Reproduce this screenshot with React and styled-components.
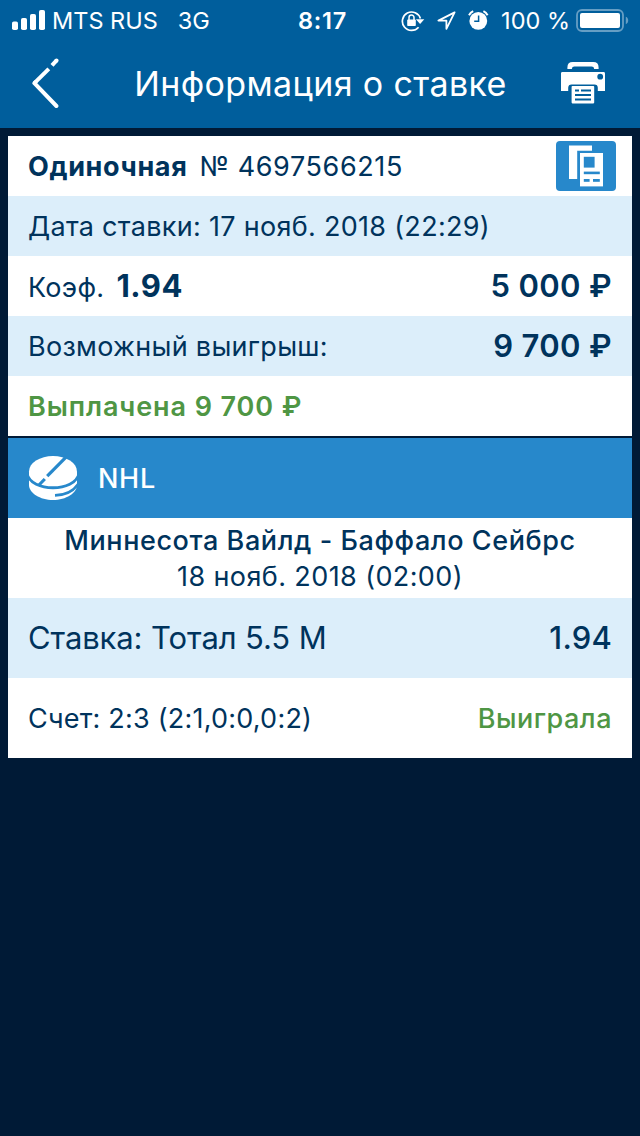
import React from "react";
import styled, { createGlobalStyle } from "styled-components";

const SignalIcon = () => (
  <svg width="34" height="21" viewBox="0 0 34 21" fill="#fff">
    <rect x="0" y="11.5" width="6" height="8.5" rx="1.8" />
    <rect x="9" y="8" width="6" height="12" rx="1.8" />
    <rect x="18" y="4" width="6" height="16" rx="1.8" />
    <rect x="27" y="0" width="6" height="20" rx="1.8" />
  </svg>
);

const LockIcon = () => (
  <svg width="24" height="22" viewBox="0 0 24 22" fill="none" stroke="#fff">
    <path d="M17.6 17.2A9.2 9.2 0 1 1 19.4 8.6" strokeWidth="1.7" />
    <path d="M14.9 9.3h8.4l-4.2 4.6z" fill="#fff" stroke="none" />
    <rect x="6.2" y="9.6" width="8.6" height="6.4" rx="0.8" fill="#fff" stroke="none" />
    <path d="M8 10V7.6a2.5 2.5 0 0 1 5 0V10" strokeWidth="1.5" />
  </svg>
);

const LocationIcon = () => (
  <svg width="19" height="19" viewBox="0 0 19 19" fill="none" stroke="#fff">
    <path d="M17.6 1.4 1.4 9.6h8v8.2z" strokeWidth="1.8" strokeLinejoin="round" />
  </svg>
);

const AlarmIcon = () => (
  <svg width="21" height="21" viewBox="0 0 21 21" fill="none">
    <circle cx="10.3" cy="10.9" r="8.9" fill="#fff" />
    <path d="M1 5.2A10 10 0 0 1 5.2 1.2M15.4 1.2a10 10 0 0 1 4.2 4" stroke="#fff" strokeWidth="2" />
    <path d="M10.6 5.6v5.6H6.2" stroke="#005e9c" strokeWidth="1.5" />
  </svg>
);

const BatteryIcon = () => (
  <svg width="54" height="24" viewBox="0 0 54 24" fill="none">
    <rect x="1" y="1" width="46" height="21" rx="5" stroke="#669ec4" strokeWidth="1.8" />
    <rect x="4" y="4" width="40" height="15" rx="2" fill="#fff" />
    <path d="M49.8 7.8c3.2 1.2 3.2 6.2 0 7.4z" fill="#669ec4" />
  </svg>
);

const BackIcon = () => (
  <svg width="30" height="52" viewBox="0 0 30 52" fill="none" stroke="#fff" strokeWidth="4">
    <path d="M24.4 2.6 24.5 2.5" strokeLinecap="round" />
    <path d="M24.4 2.6 20 7.4" />
    <path d="M16.8 10.8 2.4 25.2" />
    <path d="M3.4 24.2 2.4 25.2 24.4 48" strokeLinecap="round" strokeLinejoin="round" />
  </svg>
);

const PrinterIcon = () => (
  <svg width="46" height="46" viewBox="0 1 46 46" fill="#fff">
    <path d="M7.4 9V7.4Q7.4 2 12.8 2h20.4q5.4 0 5.4 5.4V9h-4.4Q34 6.6 31.6 6.6H14.4Q12 6.6 11.8 9z" />
    <path
      fillRule="evenodd"
      d="M2.4 12h41.2q1.4 0 1.4 1.4V31h-7.2v-3.2q0-3.4-3.4-3.4H11.6q-3.4 0-3.4 3.4V31H1V13.4Q1 12 2.4 12zM40.2 13.8a2.9 2.9 0 1 0 0 5.8 2.9 2.9 0 0 0 0-5.8z"
    />
    <rect x="11.6" y="26" width="22.6" height="17.4" rx="0.8" />
    <path d="M15 30.4h4M21 30.4h10M15 35h16M15 39.4h16" stroke="#005e9c" strokeWidth="2" />
  </svg>
);

const PagesIcon = () => (
  <svg width="36" height="42" viewBox="0 0 36 42">
    <path d="M1 .6h23v5.2H9.2V34H1z" fill="#fff" />
    <rect x="12" y="8" width="23" height="33.4" fill="#fff" />
    <g fill="#2788cb">
      <rect x="15.8" y="11.8" width="10.8" height="10.8" />
      <rect x="15.8" y="26.6" width="16" height="2.6" />
      <rect x="15.8" y="34" width="5.8" height="2.8" />
      <rect x="25" y="34" width="6.8" height="2.8" />
    </g>
  </svg>
);

const PuckIcon = () => (
  <svg width="50" height="46" viewBox="0 0 50 46" fill="none">
    <path d="M1 16.5A24 15.5 0 0 1 49 16.5V30C49 38 38 45 25 45S1 38 1 30z" fill="#fff" />
    <g stroke="#2788cb">
      <path d="M-1 18.5C3 37.5 47 37.5 51 18.5" strokeWidth="2.8" />
      <path d="M50 29.2C45.5 36 37 40 27 40.4" strokeWidth="2.6" />
      <path d="M38.5 1.6 19.2 21.2" strokeWidth="3.2" />
      <path d="M16.8 24 11 30" strokeWidth="3.2" />
    </g>
  </svg>
);

const App = () => {
  return (
    <Screen>
      <GlobalStyle />
      <StatusBar>
        <StatusGroup>
          <SignalIcon />
          <StatusText $left={6}>MTS RUS</StatusText>
          <StatusText $left={20}>3G</StatusText>
        </StatusGroup>
        <Clock>8:17</Clock>
        <StatusGroup $end>
          <LockIcon />
          <LocationIcon />
          <AlarmIcon />
          <StatusText>100 %</StatusText>
          <BatteryIcon />
        </StatusGroup>
      </StatusBar>

      <Header>
        <IconButton aria-label="Назад">
          <BackIcon />
        </IconButton>
        <h1>Информация о ставке</h1>
        <IconButton aria-label="Печать">
          <PrinterIcon />
        </IconButton>
      </Header>

      <Content>
        <Row>
          <div>
            <Label $weight={700} $spacing={0.65}>Одиночная</Label>
            <Label $left={12} $spacing={0.6}>№ 4697566215</Label>
          </div>
          <PagesButton aria-label="Купон">
            <PagesIcon />
          </PagesButton>
        </Row>
        <Row $tinted>
          <Label>Дата ставки: 17 нояб. 2018 (22:29)</Label>
        </Row>
        <Row>
          <div>
            <Label>Коэф.</Label>
            <Amount $left={12} $weight={700}>1.94</Amount>
          </div>
          <Amount>5 000 ₽</Amount>
        </Row>
        <Row $tinted>
          <Label>Возможный выигрыш:</Label>
          <Amount>9 700 ₽</Amount>
        </Row>
        <Row>
          <Label $weight={600} $spacing={0.9} $green>Выплачена 9 700 ₽</Label>
        </Row>

        <League>
          <PuckIcon />
          <span>NHL</span>
        </League>
        <Match>
          <Label $weight={500} $spacing={0.58}>Миннесота Вайлд - Баффало Сейбрс</Label>
          <Label $spacing={0.4}>18 нояб. 2018 (02:00)</Label>
        </Match>
        <Row $tall $tinted>
          <Bet>Ставка: Тотал 5.5 М</Bet>
          <Bet $medium>1.94</Bet>
        </Row>
        <Row $tall>
          <Label $spacing={0.22}>Счет: 2:3 (2:1,0:0,0:2)</Label>
          <Label $weight={500} $spacing={0.5} $green>Выиграла</Label>
        </Row>
      </Content>
    </Screen>
  );
};

export default App;

const GlobalStyle = createGlobalStyle`
  * {
    box-sizing: border-box;
  }

  body {
    margin: 0;
    background: #001a36;
  }

  svg {
    display: block;
    flex-shrink: 0;
  }
`;

const Screen = styled.div`
  width: 640px;
  height: 1136px;
  overflow: hidden;
  background: #001a36;
  color: #00335c;
  font-family: Inter, "Liberation Sans", sans-serif;
  white-space: nowrap;
`;

const StatusBar = styled.div`
  display: grid;
  grid-template-columns: 1fr auto 1fr;
  align-items: center;
  height: 40px;
  padding: 1px 10px 0 12px;
  background: #005e9c;
  color: #fff;
`;

const StatusGroup = styled.div`
  display: flex;
  align-items: center;
  justify-content: ${({ $end }) => ($end ? "flex-end" : "flex-start")};
  gap: ${({ $end }) => ($end ? "12px" : "0")};

  svg:last-child {
    margin-left: -6px;
  }
`;

const StatusText = styled.span`
  margin-left: ${({ $left }) => $left || 0}px;
  font-size: 23.5px;
  line-height: 39px;
`;

const Clock = styled.span`
  padding-left: 3px;
  font-weight: 600;
  font-size: 23.5px;
  line-height: 39px;
  letter-spacing: 0.7px;
`;

const Header = styled.header`
  display: flex;
  align-items: center;
  justify-content: space-between;
  height: 88px;
  padding: 0 34px 0 32px;
  background: #005e9c;
  color: #fff;

  h1 {
    margin: 0;
    padding-left: 3px;
    font-weight: 400;
    font-size: 34px;
    line-height: 88px;
    letter-spacing: 0.36px;
  }
`;

const IconButton = styled.button`
  width: 48px;
  padding: 0;
  border: none;
  background: none;

  &:last-child svg {
    margin-left: 2px;
  }
`;

const Content = styled.main`
  padding: 8px 8px 0;
`;

const Row = styled.div`
  display: flex;
  align-items: center;
  justify-content: space-between;
  height: ${({ $tall }) => ($tall ? 80 : 60)}px;
  padding: 1px 20px 0;
  background: ${({ $tinted }) => ($tinted ? "#dceefa" : "#fff")};
`;

const Label = styled.span`
  margin-left: ${({ $left }) => $left || 0}px;
  font-weight: ${({ $weight }) => $weight || 400};
  font-size: 27px;
  line-height: 36px;
  letter-spacing: ${({ $spacing }) => $spacing || 0.3}px;
  color: ${({ $green }) => ($green ? "#4f9644" : "inherit")};
`;

const Amount = styled.span`
  margin-left: ${({ $left }) => $left || 0}px;
  padding-bottom: 2px;
  font-weight: ${({ $weight }) => $weight || 600};
  font-size: 31px;
  line-height: 38px;
  letter-spacing: ${({ $weight }) => ($weight ? 0.5 : 0.35)}px;
`;

const PagesButton = styled.button`
  display: flex;
  align-items: center;
  justify-content: center;
  width: 60px;
  height: 50px;
  margin: -1px -4px 0 0;
  padding: 0;
  border: none;
  border-radius: 4px;
  background: #2788cb;
`;

const League = styled.div`
  display: flex;
  align-items: center;
  gap: 20px;
  height: 80px;
  margin-top: 2px;
  padding: 0 20px;
  background: #2788cb;
  color: #fff;
  font-weight: 500;
  font-size: 27px;
  letter-spacing: 0.7px;
`;

const Match = styled.div`
  display: flex;
  flex-direction: column;
  align-items: center;
  height: 80px;
  padding-top: 5px;
  background: #fff;
`;

const Bet = styled.span`
  padding-bottom: 2px;
  font-weight: ${({ $medium }) => ($medium ? 500 : 400)};
  font-size: 31px;
  line-height: 40px;
  letter-spacing: ${({ $medium }) => ($medium ? 0.2 : -0.1)}px;
`;
